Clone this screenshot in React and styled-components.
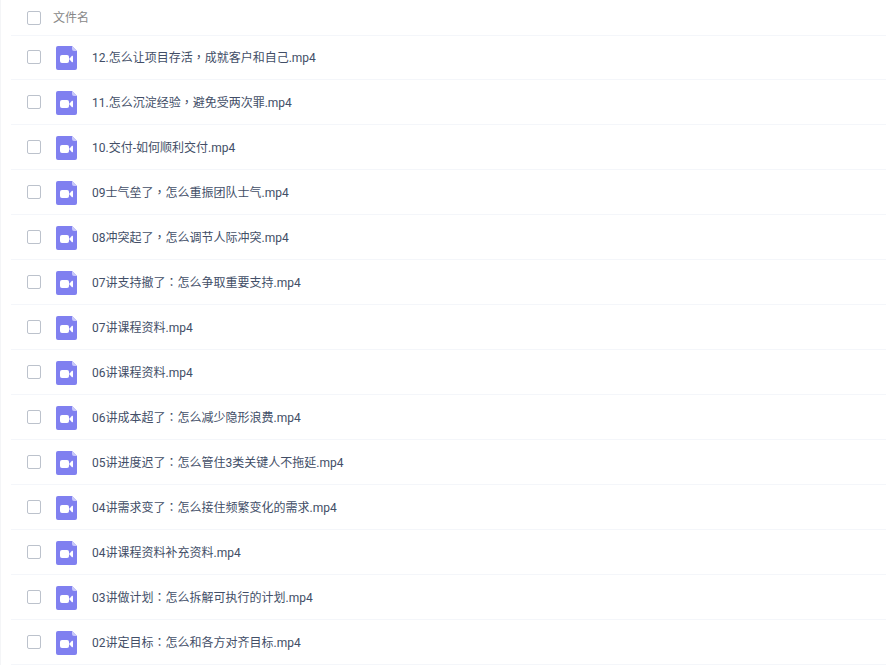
import React from 'react';
import styled, { createGlobalStyle } from 'styled-components';

const GlobalStyle = createGlobalStyle`
    * {
        box-sizing: border-box;
    }

    body {
        margin: 0;
        background: #FFF;
        color: #424E67;
        font-family: Roboto, "Noto Sans CJK SC", sans-serif;
        font-size: 12px;
        line-height: 16px;
    }
`

const Page = styled.main`
    border-left: 1px solid #F4F5F7;
    padding-left: 10px;
`

const Table = styled.table`
    width: 100%;
    border-collapse: separate;
    border-spacing: 0;
    table-layout: fixed;
`

const Cell = styled.td`
    padding: 0;
    border-bottom: 1px solid #F4F6FA;
    font-weight: 400;
    text-align: left;
    vertical-align: middle;
    white-space: nowrap;
`

const CheckCell = styled(Cell)`
    width: 42px;
    padding-left: 16px;
`

const HeadRow = styled.tr`
    height: 36px;
    color: #888;
`

const Row = styled.tr`
    height: 45px;

    &:first-child {
        height: 44px;
    }

    ${Cell} {
        padding-bottom: 9px;
        vertical-align: bottom;
    }

    ${CheckCell} {
        padding-bottom: 15px;
    }
`

const Checkbox = styled.input`
    appearance: none;
    display: block;
    width: 14px;
    height: 14px;
    margin: 0;
    border: 1px solid #BCC2CC;
    border-radius: 2px;
    background: #FFF;
    cursor: pointer;

    &:checked {
        background: #8080F0;
    }
`

const FileLabel = styled.label`
    display: flex;
    align-items: center;
    gap: 15px;
    padding-left: 3px;
    cursor: pointer;
`

const Icon = styled.svg`
    flex: none;
    width: 21px;
    height: 24px;
`

// full-width marks sit in the middle of their box
const Mark = styled.span`
    font-family: "Noto Sans CJK TC", sans-serif;
    line-height: 1;
`

const VideoIcon = () => (
    <Icon viewBox="0 0 21 24" aria-hidden="true">
        <path d="M2 0H16L21 5V22Q21 24 19 24H2Q0 24 0 22V2Q0 0 2 0Z" fill="#8080F0" />
        <path d="M16 0L21 5H18Q16 5 16 3Z" fill="#C9C9FA" />
        <rect x="4" y="9" width="9" height="8" rx="2" fill="#FFF" />
        <path d="M13.5 12.4L16 9.8Q17 9.4 17 10.4V15.6Q17 16.6 16 16.2L13.5 13.6Z" fill="#FFF" />
    </Icon>
)

const FileName = ({ name }) => (
    <span>
        {name.split(/([，：])/).map((part, i) => (
            i % 2 ? <Mark key={i} lang="zh-TW">{part}</Mark> : part
        ))}
    </span>
)

const files = [
    '12.怎么让项目存活，成就客户和自己.mp4',
    '11.怎么沉淀经验，避免受两次罪.mp4',
    '10.交付-如何顺利交付.mp4',
    '09士气垒了，怎么重振团队士气.mp4',
    '08冲突起了，怎么调节人际冲突.mp4',
    '07讲支持撤了：怎么争取重要支持.mp4',
    '07讲课程资料.mp4',
    '06讲课程资料.mp4',
    '06讲成本超了：怎么减少隐形浪费.mp4',
    '05讲进度迟了：怎么管住3类关键人不拖延.mp4',
    '04讲需求变了：怎么接住频繁变化的需求.mp4',
    '04讲课程资料补充资料.mp4',
    '03讲做计划：怎么拆解可执行的计划.mp4',
    '02讲定目标：怎么和各方对齐目标.mp4',
]

export default function App() {
    return (
        <>
            <GlobalStyle />
            <Page lang="zh-CN">
                <Table>
                    <thead>
                        <HeadRow>
                            <CheckCell as="th">
                                <Checkbox type="checkbox" id="all" />
                            </CheckCell>
                            <Cell as="th" scope="col"><label htmlFor="all">文件名</label></Cell>
                        </HeadRow>
                    </thead>
                    <tbody>
                        {files.map((name, i) => (
                            <Row key={name}>
                                <CheckCell>
                                    <Checkbox type="checkbox" id={`file-${i}`} />
                                </CheckCell>
                                <Cell>
                                    <FileLabel htmlFor={`file-${i}`}>
                                        <VideoIcon />
                                        <FileName name={name} />
                                    </FileLabel>
                                </Cell>
                            </Row>
                        ))}
                    </tbody>
                </Table>
            </Page>
        </>
    )
}
